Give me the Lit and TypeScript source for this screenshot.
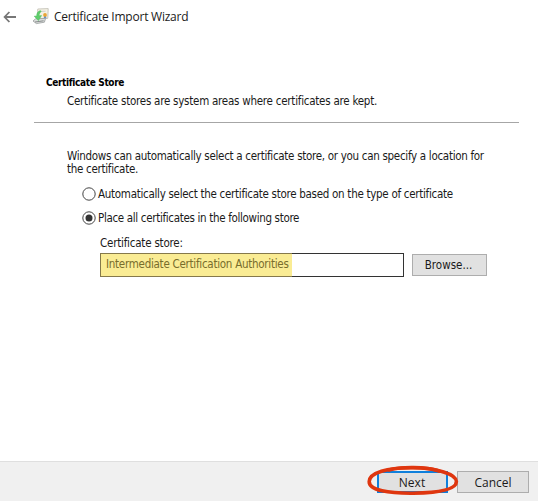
import { LitElement, css, html, svg } from 'lit'
import { customElement, property, state } from 'lit/decorators.js'

const backArrow = svg`
	<path d="M9.4 1 L4.6 6 L9.4 11 M4.8 6 H16" fill="none" stroke="#777" stroke-width="1.8" />
`

const certIcon = svg`
	<path d="M5.8 1 L16.2 .6 L15.8 10.4 L5.2 11 Z" fill="#f5f2e4" stroke="#c4c2b8" stroke-width=".9" />
	<path d="M9.6 3.4 L13.6 3.2" stroke="#cfd0cc" stroke-width="1" />
	<path d="M1 13 L3.6 10.8 L13.6 10.4 L12.4 14.2 L4.4 15.6 Z" fill="#dcdedd" stroke="#999d9d" stroke-width=".8" />
	<path d="M3 14 L11.6 12.8" stroke="#888d8d" stroke-width="1" />
	<path d="M8.2 2.6 C5.4 3.6 4.6 5.8 4.8 8 L2.2 8.2 L6.4 12.6 L9.6 7.6 L7.2 7.8 C7 6 7.8 4.4 9.4 3.4 Z" fill="#5fce6c" stroke="#4db85c" stroke-width=".5" />
	<path d="M12 8 L11.8 10.4 L13 9.8 L14.4 10.4 L14 8 Z" fill="#5b8bc9" />
	<circle cx="13" cy="6.9" r="1.9" fill="#e9a536" />
`

@customElement('wizard-radio')
export class WizardRadio extends LitElement {
	@property({ type: Boolean })
	checked = false

	render() {
		return html`
		<svg class="dot" width="14" height="14" viewBox="0 0 14 14">
			<circle cx="7" cy="7" r="6.2" fill="#fff" stroke="#444" stroke-width="1" />
			${this.checked ? svg`<circle cx="7" cy="7" r="3.5" fill="#333" />` : ''}
		</svg>
		<slot></slot>
	`
	}

	static styles = css`
	:host {
		display: flex;
		align-items: center;
		gap: 2px;
		height: 24px;
		white-space: nowrap;
	}

	.dot {
		flex: none;
	}
	`
}

@customElement('app-root')
export class AppRoot extends LitElement {
	@state()
	automatic = false

	render() {
		return html`
		<header class="title-bar">
			<svg class="back" width="17" height="12" viewBox="0 0 17 12">${backArrow}</svg>
			<svg class="cert" width="17" height="17" viewBox="0 0 17 17">${certIcon}</svg>
			<span class="title">Certificate Import Wizard</span>
		</header>
		<main class="page">
			<h1 class="heading">Certificate Store</h1>
			<p class="subheading">Certificate stores are system areas where certificates are kept.</p>
			<div class="rule"></div>
			<p class="intro">
				Windows can automatically select a certificate store, or you can specify a location for<br>
				the certificate.
			</p>
			<div class="options">
				<wizard-radio class="auto" ?checked=${this.automatic} @click=${() => this._select(true)}>Automatically select the certificate store based on the type of certificate</wizard-radio>
				<wizard-radio class="place" ?checked=${!this.automatic} @click=${() => this._select(false)}>Place all certificates in the following store</wizard-radio>
			</div>
			<div class="label">Certificate store:</div>
			<div class="store-row">
				<div class="field"><span class="marked">Intermediate Certification Authorities</span></div>
				<button class="button browse">Browse...</button>
			</div>
		</main>
		<footer class="footer">
			<div class="next-wrap">
				<button class="button next">Next</button>
				<svg class="ring" width="92" height="32" viewBox="0 0 92 32">
					<path d="M46 2.8 C20 2.4 2.5 8 2.2 16.5 C2 25.5 22 28.4 46 28.2 C70 27.8 89.5 25 89.4 16.5 C89 9 70 3 46 2.8 Z" fill="none" stroke="#df360f" stroke-width="3.6" />
					<path d="M22 5 C34 1.6 58 1.4 72 6" fill="none" stroke="#df360f" stroke-width="3.6" stroke-linecap="round" />
				</svg>
			</div>
			<button class="button cancel">Cancel</button>
		</footer>
	`
	}

	private _select(automatic: boolean) {
		this.automatic = automatic
	}

	static styles = css`
	:host {
		display: flex;
		flex-direction: column;
		width: 538px;
		height: 501px;
		overflow: hidden;
		background: #fff;
		color: #1a1a1a;
		font: 11.5px/14px "DejaVu Sans Condensed", "DejaVu Sans", sans-serif;
		font-stretch: condensed;
		letter-spacing: -.3px;
	}

	h1, p {
		margin: 0;
	}

	.title-bar {
		display: flex;
		align-items: center;
		height: 33px;
		box-sizing: border-box;
	}

	.cert {
		margin-left: 15px;
	}

	.title {
		margin-left: 5px;
		font: 12px/16px "Open Sans", sans-serif;
		letter-spacing: -.23px;
	}

	.page {
		flex: 1;
		padding-top: 43px;
		white-space: nowrap;
	}

	.heading {
		padding-left: 46px;
		font: bold 10px/14px "DejaVu Sans Condensed", "DejaVu Sans", sans-serif;
		font-stretch: condensed;
		letter-spacing: -.35px;
		color: #000;
	}

	.subheading {
		padding: 4px 0 0 67px;
		letter-spacing: -.25px;
	}

	.rule {
		height: 1px;
		margin: 14px 19px 0 34px;
		background: #a6a6a6;
	}

	.intro {
		padding: 27px 0 0 67px;
		line-height: 13px;
	}

	.options {
		padding: 6px 0 0 82px;
	}

	.auto {
		letter-spacing: -.29px;
	}

	.place {
		letter-spacing: -.33px;
	}

	.label {
		padding: 6px 0 0 100px;
		letter-spacing: -.22px;
	}

	.store-row {
		display: flex;
		align-items: center;
		gap: 8px;
		padding: 3px 0 0 100px;
	}

	.field {
		display: flex;
		width: 304px;
		height: 24px;
		box-sizing: border-box;
		border: 1px solid #333;
	}

	.marked {
		width: 192px;
		box-sizing: border-box;
		margin: -1px 0 -1px -1px;
		padding-left: 5px;
		border: 1px solid #85794b;
		border-right: 0;
		background: #faec94;
		color: #786d2c;
		line-height: 20px;
		letter-spacing: -.27px;
	}

	.button {
		box-sizing: border-box;
		height: 22px;
		padding: 0;
		border: 1px solid #adadad;
		background: #e1e1e1;
		color: #1a1a1a;
		font: 12px/18px "Open Sans", sans-serif;
	}

	.browse {
		width: 75px;
		padding-right: 2px;
		font: 11.5px/18px "DejaVu Sans Condensed", "DejaVu Sans", sans-serif;
		font-stretch: condensed;
	}

	.footer {
		display: flex;
		justify-content: flex-end;
		gap: 9px;
		height: 40px;
		box-sizing: border-box;
		padding: 9px 9px 0 0;
		border-top: 1px solid #dfdfdf;
		background: #f0f0f0;
	}

	.next-wrap {
		position: relative;
	}

	.next {
		width: 71px;
		padding: 1px 1px 0 0;
		border: 2px solid #0f80dc;
	}

	.ring {
		position: absolute;
		left: -10px;
		top: -6px;
	}

	.cancel {
		width: 72px;
		padding-top: 1px;
	}
	`
}

declare global {
	interface HTMLElementTagNameMap {
		'wizard-radio': WizardRadio
		'app-root': AppRoot
	}
}
